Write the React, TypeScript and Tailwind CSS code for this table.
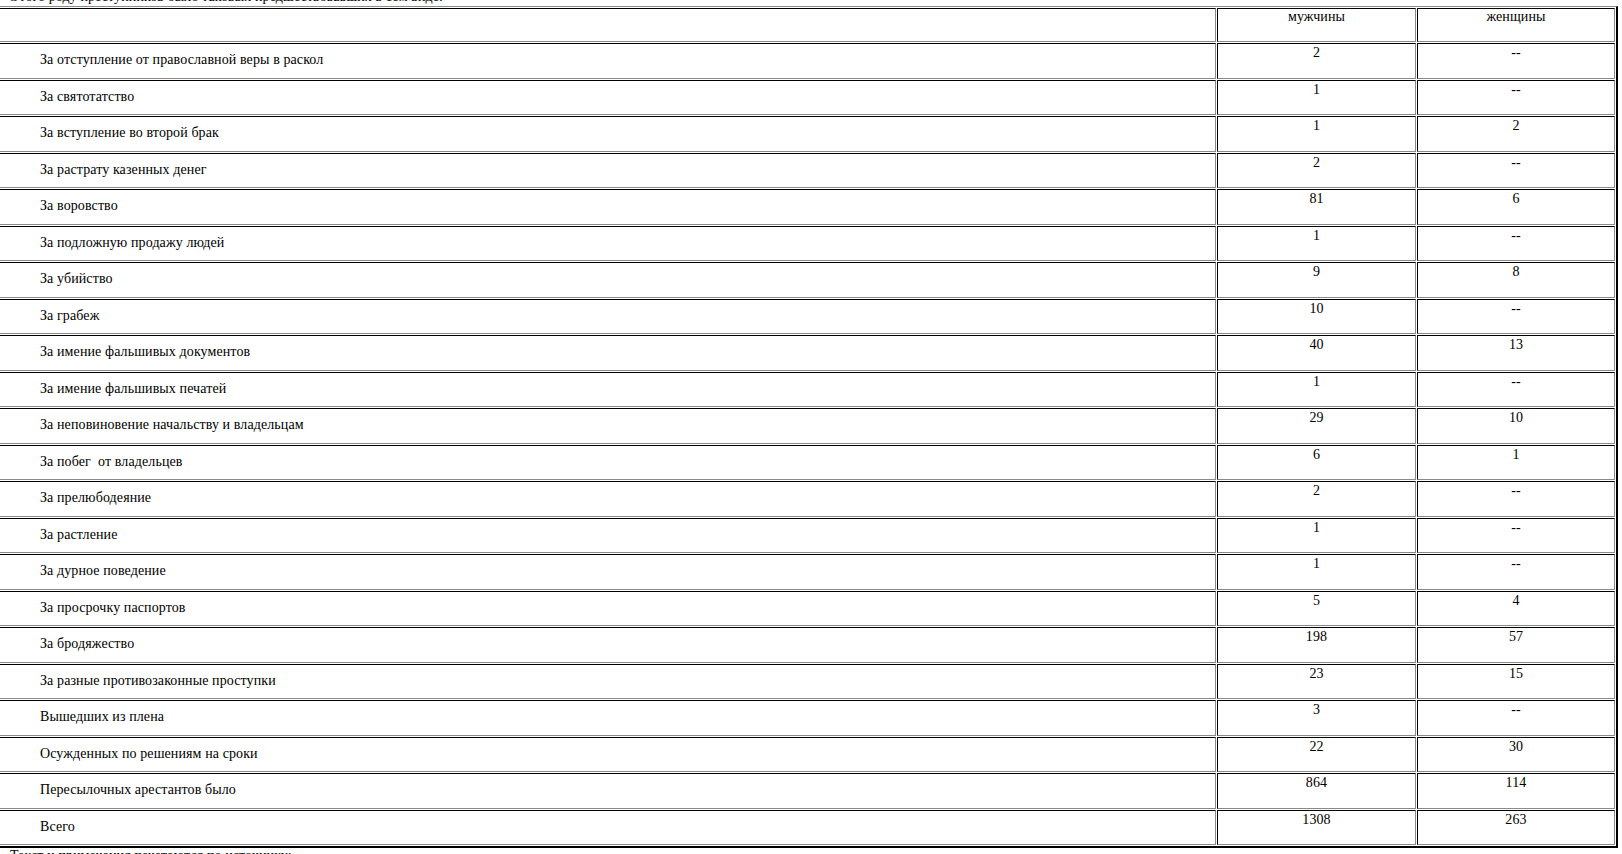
import React from 'react';

type Row = { label: string; men: string; women: string };

const rows: Row[] = [
  { label: 'За отступление от православной веры в раскол', men: '2', women: '--' },
  { label: 'За святотатство', men: '1', women: '--' },
  { label: 'За вступление во второй брак', men: '1', women: '2' },
  { label: 'За растрату казенных денег', men: '2', women: '--' },
  { label: 'За воровство', men: '81', women: '6' },
  { label: 'За подложную продажу людей', men: '1', women: '--' },
  { label: 'За убийство', men: '9', women: '8' },
  { label: 'За грабеж', men: '10', women: '--' },
  { label: 'За имение фальшивых документов', men: '40', women: '13' },
  { label: 'За имение фальшивых печатей', men: '1', women: '--' },
  { label: 'За неповиновение начальству и владельцам', men: '29', women: '10' },
  { label: 'За побег  от владельцев', men: '6', women: '1' },
  { label: 'За прелюбодеяние', men: '2', women: '--' },
  { label: 'За растление', men: '1', women: '--' },
  { label: 'За дурное поведение', men: '1', women: '--' },
  { label: 'За просрочку паспортов', men: '5', women: '4' },
  { label: 'За бродяжество', men: '198', women: '57' },
  { label: 'За разные противозаконные проступки', men: '23', women: '15' },
  { label: 'Вышедших из плена', men: '3', women: '--' },
  { label: 'Осужденных по решениям на сроки', men: '22', women: '30' },
  { label: 'Пересылочных арестантов было', men: '864', women: '114' },
  { label: 'Всего', men: '1308', women: '263' },
];

// inset cell border, like an old border=1 table
const cell = 'border border-t-black border-l-black border-r-[#8a8a8a] border-b-[#8a8a8a] p-0';

export default function App() {
  return (
    <div className="h-[854px] overflow-hidden bg-white text-black font-['Liberation_Serif',serif] text-[14px] leading-[15px] tracking-[0.1px]">
      <p className="pl-[10px] -mt-[11px] whitespace-pre">
        Этого роду преступников было таковых предшествовавших в сем виде:
      </p>

      <table className="mt-[2px] ml-[-20px] w-[1638px] table-fixed border-separate border-spacing-px border border-t-[#8a8a8a] border-l-[#8a8a8a] border-r-2 border-b-2 border-r-black border-b-black">
        <thead>
          <tr>
            <th className={`${cell} h-[34px] font-normal`}></th>
            <th className={`${cell} h-[34px] w-[199px] align-top font-normal text-center`}>
              мужчины
            </th>
            <th className={`${cell} h-[34px] w-[198px] align-top font-normal text-center`}>
              женщины
            </th>
          </tr>
        </thead>
        <tbody>
          {rows.map(r => (
            <tr key={r.label}>
              <td className={`${cell} h-[35.5px] align-middle pl-[57px] pb-[2px] whitespace-pre`}>
                {r.label}
              </td>
              <td className={`${cell} h-[35.5px] align-top text-center pt-px`}>{r.men}</td>
              <td className={`${cell} h-[35.5px] align-top text-center pt-px`}>{r.women}</td>
            </tr>
          ))}
        </tbody>
      </table>

      <p className="pl-[10px]">Текст и примечания печатаются по источнику:</p>
    </div>
  );
}
